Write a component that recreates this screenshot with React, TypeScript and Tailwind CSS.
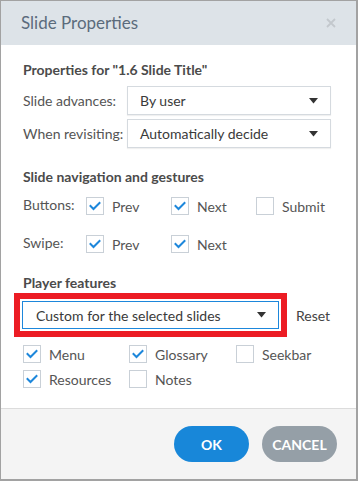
import React from "react";

const font = { fontFamily: 'Lato, "Open Sans", sans-serif' };

function Check({ checked }: { checked: boolean }) {
  return (
    <div className="w-[18px] h-[18px] border border-[#c9d0d7] bg-white flex items-center justify-center shrink-0">
      {checked && (
        <svg width="14" height="14" viewBox="0 0 14 14">
          <path d="M2.5 7 L5.5 10 L11.5 4" fill="none" stroke="#1d87db" strokeWidth="2" strokeLinecap="square" />
        </svg>
      )}
    </div>
  );
}

function Arrow() {
  return (
    <svg width="9" height="6" viewBox="0 0 9 6" className="shrink-0">
      <path d="M0 0 L9 0 L4.5 5.5 Z" fill="#333" />
    </svg>
  );
}

function Select({ value }: { value: string }) {
  return (
    <div className="w-[204px] h-[29px] border border-[#d5dadf] shadow-[0_1px_1px_rgba(0,0,0,0.06)] bg-white flex items-center justify-between pl-[12px] pr-[12px] text-[14px] text-[#3a3a3a] whitespace-nowrap">
      <span>{value}</span>
      <Arrow />
    </div>
  );
}

function CB({ checked, label, w }: { checked: boolean; label: string; w: string }) {
  return (
    <div className={`flex items-center ${w}`}>
      <Check checked={checked} />
      <span className="ml-[8px] text-[14px] text-[#555] leading-none pt-[2px] whitespace-nowrap">{label}</span>
    </div>
  );
}

export default function App() {
  return (
    <div style={font} className="w-[358px] h-[481px] flex flex-col border-l border-t border-r-2 border-b-2 border-[#a2a2a2] bg-white">
      <div className="h-[44px] bg-[#dde3e8] flex items-center justify-between pl-[20px] pr-[20px]">
        <span className="text-[17px] text-[#5b6b7c]">Slide Properties</span>
        <svg width="10" height="10" viewBox="0 0 10 10">
          <path d="M1 1 L9 9 M9 1 L1 9" stroke="#c3c8cd" strokeWidth="1.8" />
        </svg>
      </div>
      <div className="flex flex-col pl-[22px]">
        <div className="mt-[15px] h-[19px] leading-[19px] text-[14px] font-bold text-[#4b4b4b]">
          Properties for "1.6 Slide Title"
        </div>
        <div className="mt-[7px] flex items-center">
          <span className="w-[104px] text-[14px] text-[#555] whitespace-nowrap">Slide advances:</span>
          <Select value="By user" />
        </div>
        <div className="mt-[4px] flex items-center">
          <span className="w-[104px] text-[14px] text-[#555] whitespace-nowrap">When revisiting:</span>
          <Select value="Automatically decide" />
        </div>
        <div className="mt-[19px] h-[19px] leading-[19px] text-[14px] font-bold text-[#4b4b4b]">
          Slide navigation and gestures
        </div>
        <div className="mt-[11px] flex items-center">
          <span className="w-[63px] text-[14px] text-[#555] -mt-[3px]">Buttons:</span>
          <CB checked label="Prev" w="w-[85px]" />
          <CB checked label="Next" w="w-[85px]" />
          <CB checked={false} label="Submit" w="w-[85px]" />
        </div>
        <div className="mt-[20px] flex items-center">
          <span className="w-[63px] text-[14px] text-[#555] -mt-[3px]">Swipe:</span>
          <CB checked label="Prev" w="w-[85px]" />
          <CB checked label="Next" w="w-[85px]" />
        </div>
        <div className="mt-[21px] h-[17px] leading-[17px] text-[14px] font-bold text-[#4b4b4b]">
          Player features
        </div>
        <div className="mt-[2px] flex items-center">
          <div className="-ml-[9px] w-[273px] h-[44px] border-[6px] border-[#ec1c24] p-[2px]">
            <div className="w-full h-full border border-[#1d87db] flex items-center justify-between pl-[13px] pr-[12px] text-[14px] text-[#3a3a3a] whitespace-nowrap">
              <span>Custom for the selected slides</span>
              <Arrow />
            </div>
          </div>
          <span className="ml-[9px] text-[14px] text-[#444]">Reset</span>
        </div>
        <div className="mt-[8px] flex items-center">
          <CB checked label="Menu" w="w-[106px]" />
          <CB checked label="Glossary" w="w-[107px]" />
          <CB checked={false} label="Seekbar" w="w-[100px]" />
        </div>
        <div className="mt-[7px] flex items-center">
          <CB checked label="Resources" w="w-[106px]" />
          <CB checked={false} label="Notes" w="w-[107px]" />
        </div>
      </div>
      <div className="mt-auto h-[71px] border-t border-[#dcdcdc] bg-[#f4f4f4] flex justify-end items-start pt-[17px] pr-[19px] gap-[13px]">
        <div className="w-[75px] h-[36px] rounded-full bg-[#1887d9] text-white text-[14px] font-bold flex items-center justify-center">OK</div>
        <div className="w-[75px] h-[36px] rounded-full bg-[#959fa7] text-white text-[14px] font-bold flex items-center justify-center">CANCEL</div>
      </div>
    </div>
  );
}
